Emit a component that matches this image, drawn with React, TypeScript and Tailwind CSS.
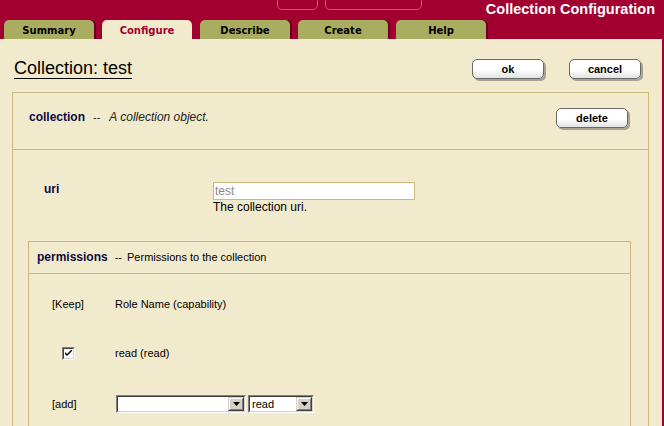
import React from 'react';

const tabs = ['Summary', 'Configure', 'Describe', 'Create', 'Help'];

const Btn = ({ label }: { label: string }) => (
  <div className="flex h-[20px] w-[72px] items-center justify-center rounded-[5px] border border-[#686868] bg-gradient-to-b from-white from-55% to-[#e2e2e2] text-[11px] font-bold text-black shadow-[2px_2px_0_#a8a493]">
    {label}
  </div>
);

const Select = ({ w, value }: { w: string; value?: string }) => (
  <div className={`flex h-[18px] ${w} border border-t-[#808080] border-l-[#808080] border-r-white border-b-white`}>
    <div className="flex flex-1 border border-t-[#404040] border-l-[#404040] border-r-[#d4d0c8] border-b-[#d4d0c8] bg-white">
      <div className="flex-1 pl-[2px] text-[11px] leading-[14px] text-black">{value}</div>
      <div className="flex w-[16px] border border-t-[#d4d0c8] border-l-[#d4d0c8] border-r-[#404040] border-b-[#404040]">
        <div className="flex flex-1 items-center justify-center border border-t-white border-l-white border-r-[#808080] border-b-[#808080] bg-[#d4d0c8]">
          <svg width="7" height="4" viewBox="0 0 7 4">
            <path d="M0 0h7L3.5 4z" fill="#000" />
          </svg>
        </div>
      </div>
    </div>
  </div>
);

export default function App() {
  return (
    <div className="h-[426px] w-[664px] overflow-hidden bg-[#a20030] font-['Liberation_Sans',Arial,sans-serif]">
      {/* header */}
      <div className="flex h-[20px] items-start">
        <div className="ml-[277px] -mt-[11px] flex gap-[7px]">
          <div className="h-[21px] w-[41px] rounded-[5px] border border-[#c85a7c]" />
          <div className="h-[21px] w-[97px] rounded-[5px] border border-[#c85a7c]" />
        </div>
        <div className="ml-auto pr-[9px] text-[14.5px] font-bold leading-[19px] text-white">Collection Configuration</div>
      </div>
      <div className="flex h-[19px] gap-[8px] pl-[4px] font-['DejaVu_Sans',Verdana,sans-serif] text-[10px] font-bold">
        {tabs.map((t) =>
          t === 'Configure' ? (
            <div key={t} className="flex w-[90px] items-center justify-center rounded-t-[5px] bg-[#f2eacc] pt-[1px] text-[#a20030]">
              {t}
            </div>
          ) : (
            <div key={t} className="flex w-[90px] items-center justify-center rounded-t-[5px] bg-[#a9ad5f] pt-[1px] text-black shadow-[2px_0_0_#6a0022]">
              {t}
            </div>
          )
        )}
      </div>

      {/* content */}
      <div className="h-[387px] w-[662px] bg-[#f2eacc]">
        <div className="flex items-start justify-between pl-[14px] pr-[21px] pt-[20px]">
          <span className="border-b border-black text-[18px] leading-[19px] text-black">Collection: test</span>
          <div className="flex gap-[25px]">
            <Btn label="ok" />
            <Btn label="cancel" />
          </div>
        </div>

        <div className="ml-[12px] mt-[13px] h-[400px] w-[637px] border border-[#c8b97c]">
          <div className="flex h-[57px] items-start justify-between border-b border-[#c8b97c] pl-[16px] pr-[20px] pt-[15px]">
            <div className="mt-[1px] flex items-center leading-[16px]">
              <span className="text-[12px] font-bold text-[#0b0b45]">collection</span>
              <span className="ml-[8px] text-[11px] text-[#222]">--</span>
              <span className="ml-[9px] text-[12px] italic text-[#222]">A collection object.</span>
            </div>
            <Btn label="delete" />
          </div>

          <div className="flex pl-[31px] pt-[32px]">
            <div className="w-[169px] text-[12px] font-bold leading-[14px] text-[#0b0b45]">uri</div>
            <div className="flex flex-col">
              <div className="h-[18px] w-[202px] border border-[#c8b97c] bg-white pl-[1px] text-[12px] leading-[16px] text-[#8a8a8a]">test</div>
              <div className="text-[12px] leading-[14px] text-black">The collection uri.</div>
            </div>
          </div>

          <div className="ml-[15px] mt-[27px] h-[200px] w-[603px] border border-[#c8b97c]">
            <div className="flex h-[32px] items-start border-b border-[#c8b97c] pl-[8px] pt-[8px] leading-[14px]">
              <span className="text-[12px] font-bold text-[#0b0b45]">permissions</span>
              <span className="ml-[7px] text-[11px] text-black">--</span>
              <span className="ml-[5px] text-[11px] text-black">Permissions to the collection</span>
            </div>
            <div className="flex flex-col pl-[23px] pt-[23px] text-[11px] text-black">
              <div className="flex h-[14px] items-center">
                <div className="w-[63px]">[Keep]</div>
                <div>Role Name (capability)</div>
              </div>
              <div className="mt-[35px] flex h-[14px] items-center">
                <div className="w-[63px] pl-[10px]">
                  <div className="h-[13px] w-[13px] border border-t-[#808080] border-l-[#808080] border-r-white border-b-white">
                    <div className="flex h-full w-full items-center justify-center border border-t-[#404040] border-l-[#404040] border-r-[#d4d0c8] border-b-[#d4d0c8] bg-white">
                      <svg width="7" height="7" viewBox="0 0 7 7">
                        <path d="M0 2v2l2 2 5-5V-1L2 4z" fill="#000" />
                      </svg>
                    </div>
                  </div>
                </div>
                <div>read (read)</div>
              </div>
              <div className="mt-[35px] flex h-[18px] items-center">
                <div className="w-[64px]">[add]</div>
                <div className="flex gap-[2px]">
                  <Select w="w-[130px]" />
                  <Select w="w-[66px]" value="read" />
                </div>
              </div>
            </div>
          </div>
        </div>
      </div>
    </div>
  );
}
